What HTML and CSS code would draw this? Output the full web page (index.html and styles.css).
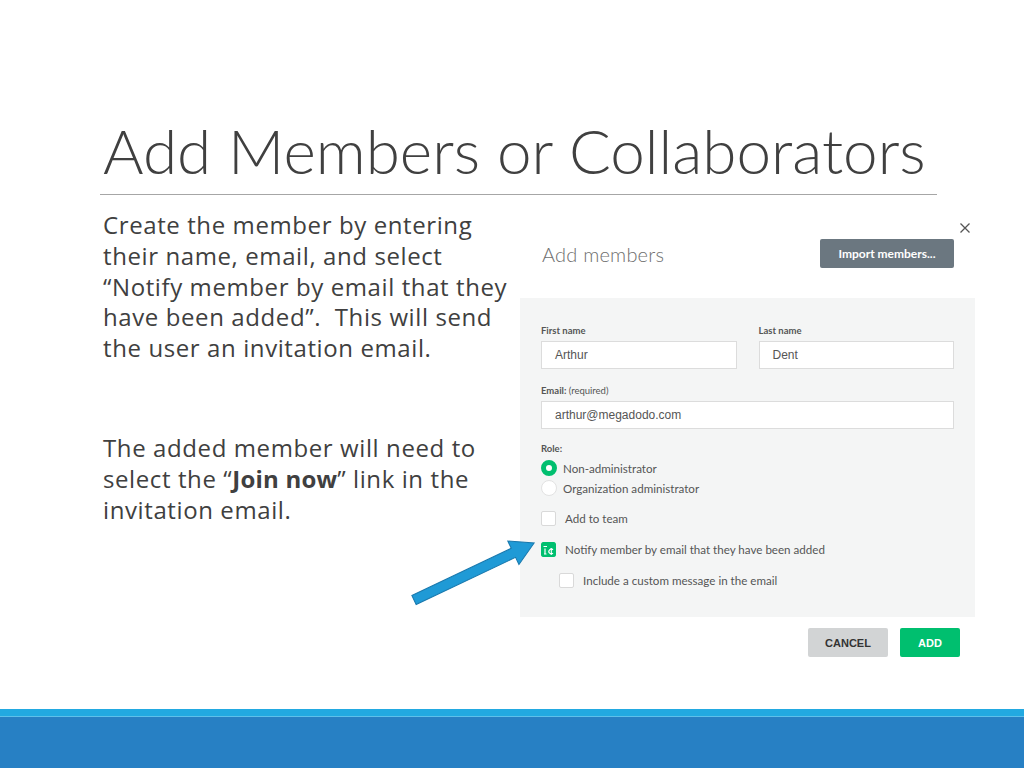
FILE: index.html
```html
<!DOCTYPE html>
<html lang="en">
	<head>
		<meta charset="UTF-8">
		<title>Add Members or Collaborators</title>
		<link rel="stylesheet" href="styles.css">
	</head>

	<body>
		<div class="slide">
			<header class="slide-head">
				<h1>Add Members or Collaborators</h1>
			</header>

			<main class="slide-body">
				<section class="notes">
					<p>Create the member by entering<br>their name, email, and select<br>“Notify member by email that they<br>have been added”.&nbsp; This will send<br>the user an invitation email.</p>
					<p>The added member will need to<br>select the “<strong>Join now</strong>” link in the<br>invitation email.</p>
				</section>

				<section class="dialog">
					<div class="dialog-top">
						<svg class="close" width="10" height="10" viewBox="0 0 10 10">
							<path d="M0.5 0.5 L9.5 9.5 M9.5 0.5 L0.5 9.5" stroke="#555" stroke-width="1.3"/>
						</svg>
					</div>

					<div class="dialog-head">
						<h2>Add members</h2>
						<span class="btn btn-import">Import members...</span>
					</div>

					<div class="panel">
						<div class="name-row">
							<div class="field">
								<div class="label">First name</div>
								<div class="input">Arthur</div>
							</div>
							<div class="field">
								<div class="label">Last name</div>
								<div class="input">Dent</div>
							</div>
						</div>

						<div class="field field-email">
							<div class="label">Email: <span class="hint">(required)</span></div>
							<div class="input">arthur@megadodo.com</div>
						</div>

						<div class="label label-role">Role:</div>
						<div class="option radio-row"><span class="radio on"></span>Non-administrator</div>
						<div class="option radio-row"><span class="radio"></span>Organization administrator</div>

						<div class="option check-row"><span class="box"></span>Add to team</div>
						<div class="option check-row">
							<svg class="box on" width="15" height="15" viewBox="0 0 15 15">
								<rect width="15" height="15" rx="1.5" fill="#00bf6f"/>
								<path d="M2.5 4.5 H6 M4 6.5 V12 M3 12 H5.5" stroke="#fff" stroke-width="1.2" fill="none"/>
								<path d="M12 7.8 A2.4 2.4 0 1 0 12 11.2 M10.3 6 V13" stroke="#fff" stroke-width="1.1" fill="none"/>
							</svg>
							Notify member by email that they have been added
						</div>
						<div class="option check-row sub"><span class="box"></span>Include a custom message in the email</div>
					</div>

					<div class="actions">
						<span class="btn btn-cancel">CANCEL</span>
						<span class="btn btn-add">ADD</span>
					</div>
				</section>
			</main>

			<svg class="arrow" width="140" height="80" viewBox="0 0 140 80">
				<polygon transform="translate(9 66) rotate(-25.4)" points="0,-5 110,-5 110,-13 133,0 110,13 110,5 0,5" fill="#1f9ad6" stroke="#1878ad" stroke-width="1"/>
			</svg>

			<footer class="slide-foot">
				<div class="strip"></div>
				<div class="band"></div>
			</footer>
		</div>
	</body>
</html>
```

FILE: styles.css
```css
body {
	margin: 0;
	background: #fff;
}

.slide {
	position: relative;
	width: 1024px;
	height: 768px;
	display: flex;
	flex-direction: column;
	overflow: hidden;
	color: #404040;
	font-family: Lato, "Open Sans", sans-serif;
}

.slide-head {
	margin: 0 87px 0 100px;
	padding-top: 114px;
	border-bottom: 1px solid #a6a6a6;
	height: 80px;
}

.slide-head h1 {
	margin: 0 0 0 3px;
	font-size: 62px;
	font-weight: 300;
	line-height: 72px;
	color: #404040;
}

.slide-body {
	display: grid;
	grid-template-columns: 417px 455px;
	padding: 15px 0 0 103px;
}

.notes p {
	margin: 0;
	font-family: "Open Sans", Lato, sans-serif;
	font-size: 24px;
	letter-spacing: 0.6px;
	line-height: 30.8px;
	white-space: nowrap;
}

.notes p + p {
	margin-top: 69px;
}

.notes strong {
	font-weight: 700;
	letter-spacing: 0.2px;
}

/* dialog screenshot */

.dialog {
	font-family: Lato, "Open Sans", sans-serif;
	color: #555;
}

.dialog-top {
	display: flex;
	justify-content: flex-end;
	padding: 13px 5px 0 0;
	height: 10px;
}

.close {
	display: block;
}

.dialog-head {
	display: flex;
	justify-content: space-between;
	align-items: center;
	margin-top: 6px;
	padding: 0 21px 0 22px;
	height: 29px;
}

.dialog-head h2 {
	margin: 0;
	font-size: 20px;
	font-weight: 300;
	line-height: 24px;
	color: #6e6e6e;
	letter-spacing: 0.2px;
}

.btn {
	display: flex;
	align-items: center;
	justify-content: center;
	box-sizing: border-box;
	border-radius: 2px;
	font-weight: 700;
}

.btn-import {
	width: 134px;
	height: 29px;
	background: #6b7780;
	color: #fff;
	font-size: 12px;
}

.panel {
	margin-top: 30px;
	padding: 27px 21px 27px 21px;
	background: #f4f5f5;
	font-size: 11.6px;
}

.name-row {
	display: grid;
	grid-template-columns: 1fr 1fr;
	gap: 22px;
}

.label {
	font-size: 9.5px;
	font-weight: 700;
	line-height: 12px;
	color: #555;
	margin-bottom: 4px;
}

.hint {
	font-weight: 400;
}

.input {
	box-sizing: border-box;
	height: 28px;
	padding-left: 13px;
	border: 1px solid #dcdcdc;
	background: #fff;
	display: flex;
	align-items: center;
	font-family: "Liberation Sans", Arial, sans-serif;
	font-size: 12px;
	color: #555;
}

.field-email {
	margin-top: 16px;
}

.label-role {
	margin: 14px 0 3px;
}

.option {
	display: flex;
	align-items: center;
	height: 20px;
	color: #555;
}

.radio {
	box-sizing: border-box;
	width: 16px;
	height: 16px;
	margin-right: 6px;
	border-radius: 50%;
	background: #fff;
	border: 1px solid #e2e2e2;
}

.radio.on {
	border: 5px solid #00bf6f;
}

.check-row {
	margin-top: 11px;
}

.radio-row + .check-row {
	margin-top: 10px;
}

.box {
	box-sizing: border-box;
	display: block;
	width: 15px;
	height: 15px;
	margin-right: 9px;
	border: 1px solid #d9d9d9;
	border-radius: 2px;
	background: #fff;
}

.box.on {
	border: none;
	background: none;
}

.sub {
	padding-left: 18px;
}

.actions {
	display: flex;
	justify-content: flex-end;
	gap: 12px;
	margin-top: 11px;
	padding-right: 15px;
}

.btn-cancel,
.btn-add {
	height: 29px;
	font-family: "Liberation Sans", Arial, sans-serif;
	font-size: 11px;
}

.btn-cancel {
	width: 80px;
	background: #d2d4d5;
	color: #333;
}

.btn-add {
	width: 60px;
	background: #00bf6f;
	color: #fff;
}

.arrow {
	position: absolute;
	left: 405px;
	top: 534px;
}

.slide-foot {
	margin-top: auto;
}

.strip {
	height: 7px;
	background: #22a9e1;
	border-bottom: 1px solid #5ec0ea;
}

.band {
	height: 51px;
	background: #2780c4;
}
```
